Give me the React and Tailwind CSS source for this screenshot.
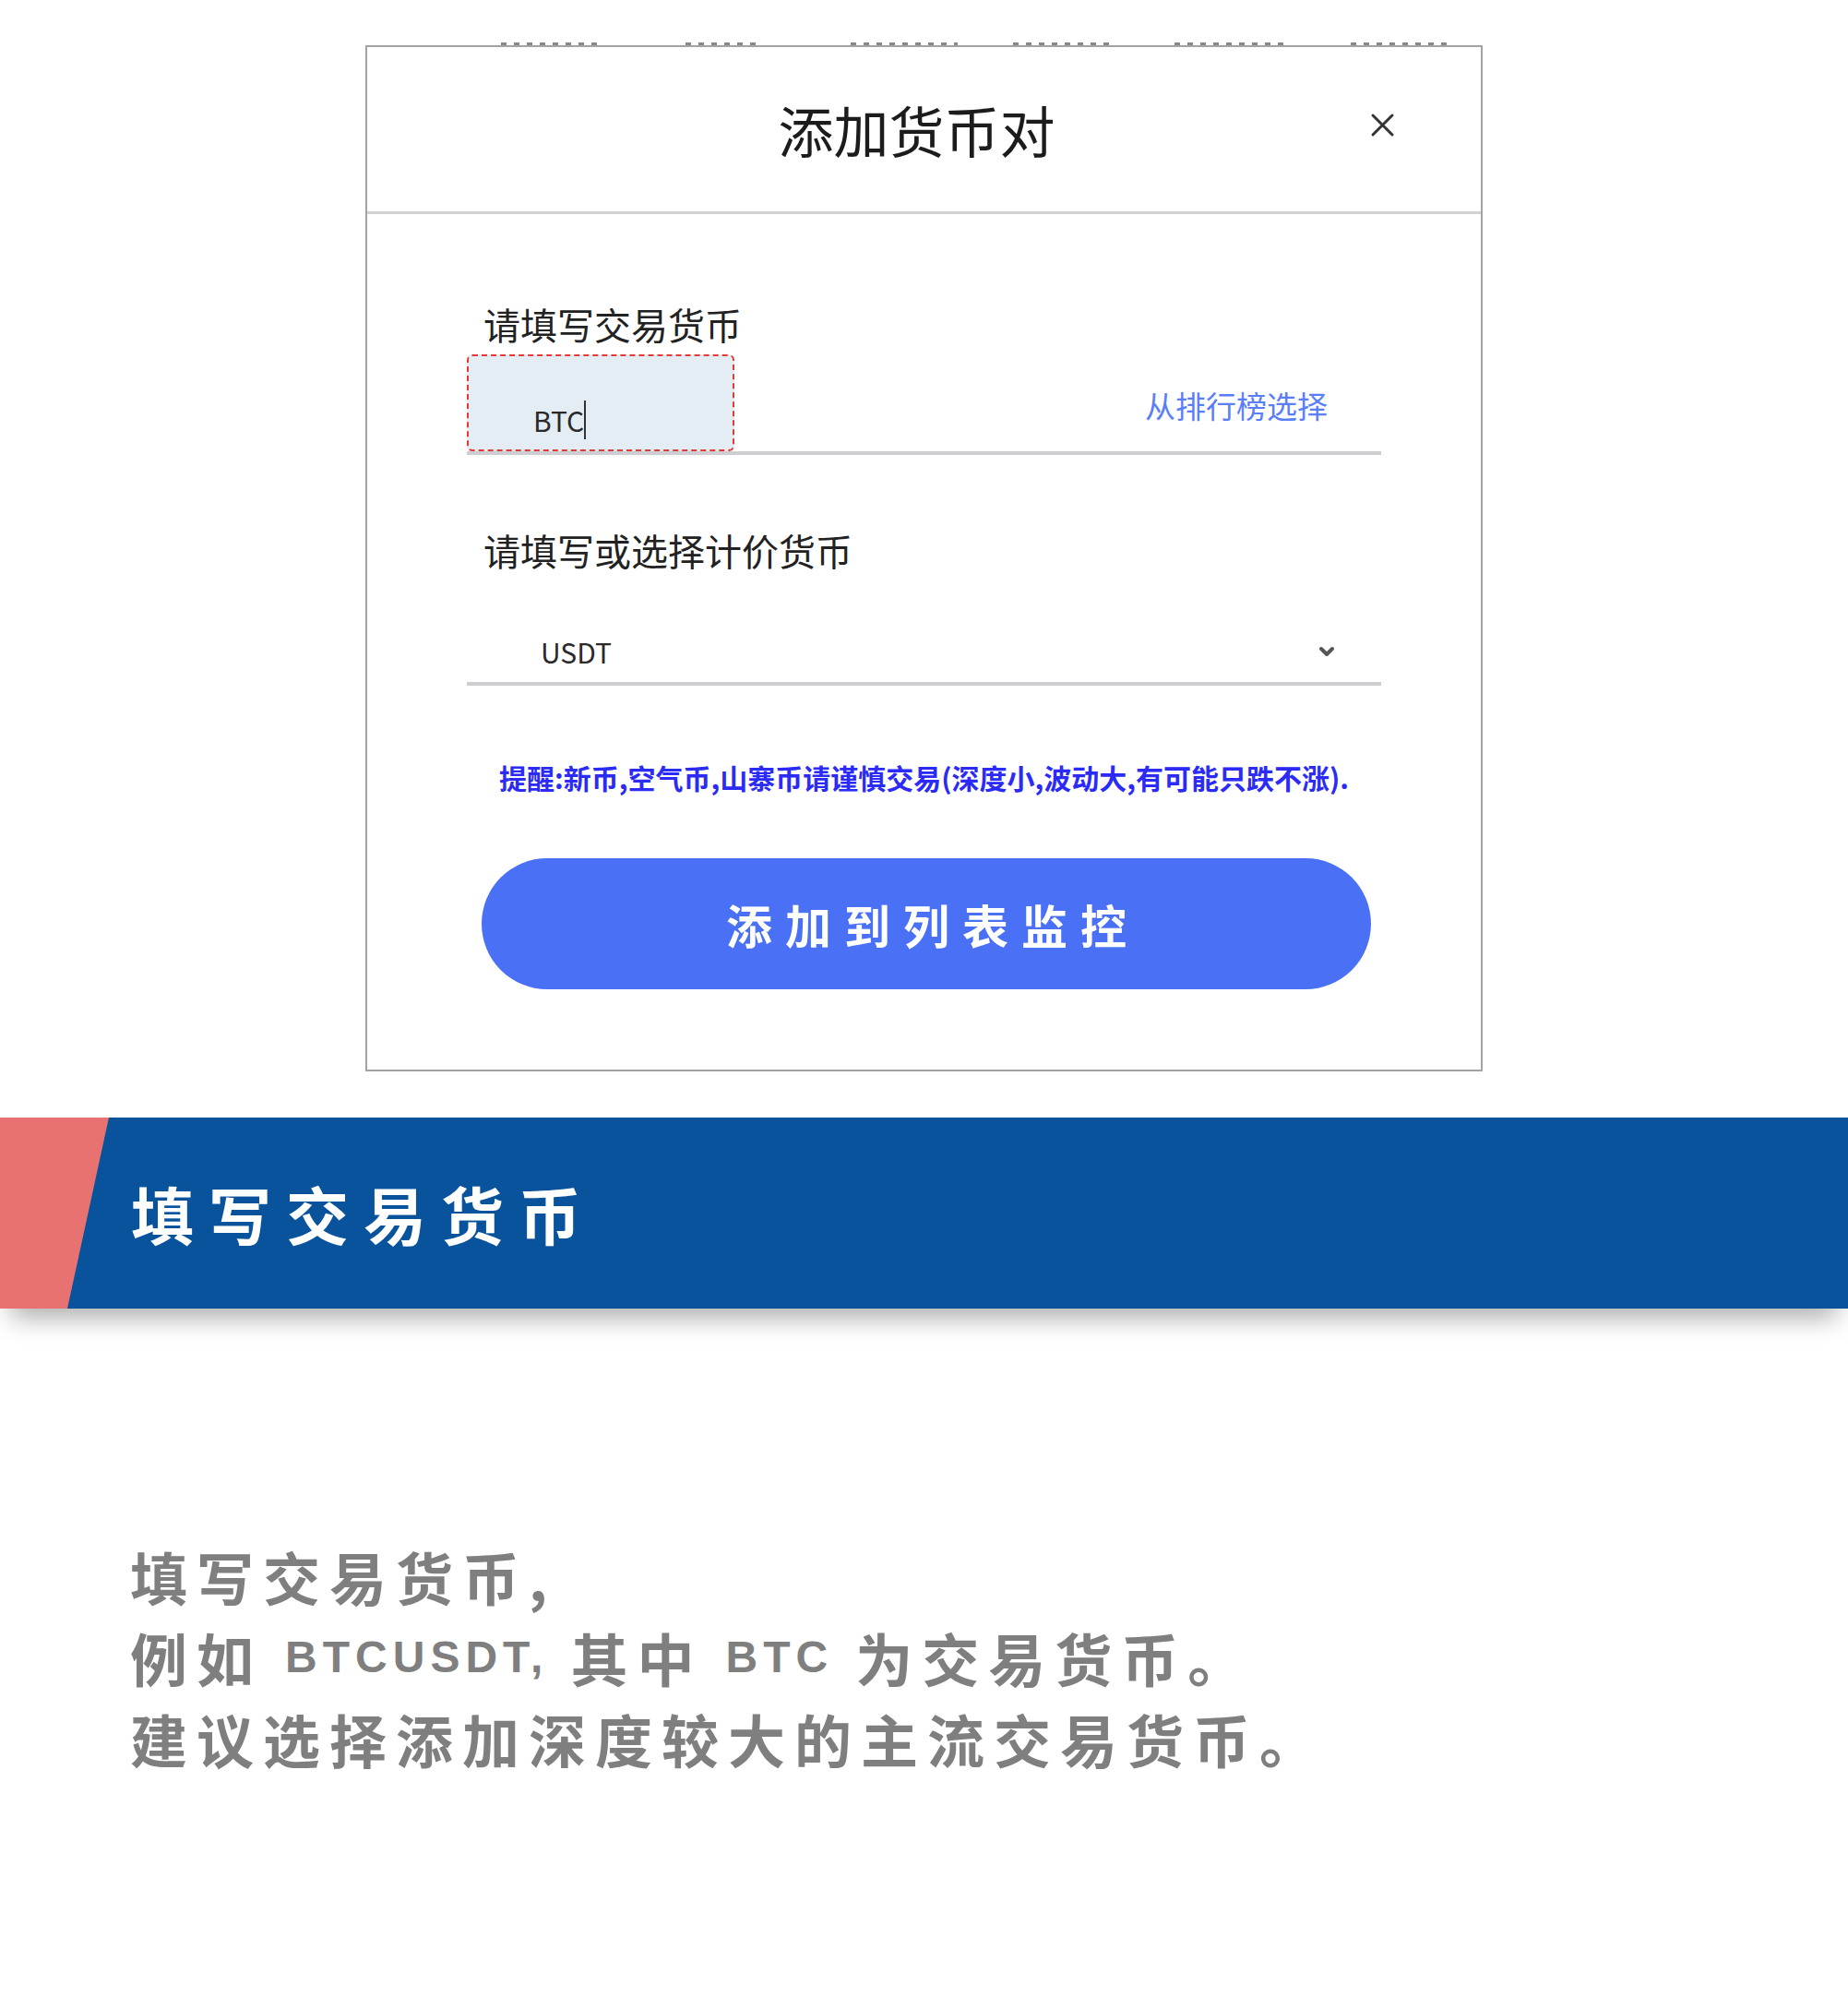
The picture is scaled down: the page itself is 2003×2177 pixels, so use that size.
import React from 'react';

const cjk = { fontFamily: '"Noto Sans CJK SC", "Noto Sans", sans-serif' };
const latin = { fontFamily: '"Liberation Sans", Arial, sans-serif' };

// bits of cut-off text peeking above the dialog frame
const crumbs = [
  [543, 112],
  [743, 84],
  [922, 116],
  [1098, 111],
  [1273, 120],
  [1464, 112],
];

const CloseIcon = () => (
  <svg width="27" height="27" viewBox="0 0 27 27">
    <path d="M3 3 L24 24 M24 3 L3 24" stroke="#333" strokeWidth="3" strokeLinecap="round" />
  </svg>
);

const Chevron = () => (
  <svg width="18" height="14" viewBox="0 0 18 14">
    <path d="M3 4 L9 10 L15 4" fill="none" stroke="#555" strokeWidth="4" strokeLinecap="round" strokeLinejoin="round" />
  </svg>
);

const AddPairDialog = () => {
  return (
    <div className="ml-[396px] w-[1211px]">
      {/* cut-off text above frame */}
      <div className="relative h-[49px]">
        {crumbs.map(([x, w]) => (
          <span
            key={x}
            className="absolute bottom-0 h-[3px] bg-[repeating-linear-gradient(90deg,#555_0_6px,transparent_6px_14px)] opacity-70"
            style={{ left: x - 396, width: w }}
          />
        ))}
      </div>

      <div className="h-[1112px] border-2 border-[#a3a3a3] bg-white flex flex-col" style={cjk}>
        {/* Header */}
        <div className="relative h-[181px] border-b-[3px] border-[#d2d2d2] flex items-center justify-center pr-[16px]">
          <h2 className="text-[60px] leading-none font-normal text-[#1c1c1c]">添加货币对</h2>
          <button className="absolute right-[93px] top-[71px]">
            <CloseIcon />
          </button>
        </div>

        {/* Form */}
        <div className="px-[108px] flex flex-col">
          <label className="pt-[99px] pl-[18px] text-[40px] leading-[40px] text-[#222]">请填写交易货币</label>

          <div className="mt-[13px] flex justify-between items-start border-b-4 border-[#cdcdd2]">
            <div className="w-[290px] h-[105px] border-2 border-dashed border-[#e53935] rounded-[6px] bg-[#e4ecf4] pl-[70px] pt-[48px]">
              <span className="text-[30px] leading-[36px] text-[#2a2a2a] align-middle">BTC</span>
              <span className="inline-block w-[2px] h-[42px] bg-[#333] align-middle" />
            </div>
            <a className="mt-[35px] mr-[58px] text-[33px] leading-[40px] text-[#5a7ef7]">从排行榜选择</a>
          </div>

          <label className="mt-[83px] pl-[18px] text-[40px] leading-[40px] text-[#222]">请填写或选择计价货币</label>

          <div className="mt-[57px] h-[66px] flex items-center justify-between pl-[80px] pr-[50px] border-b-4 border-[#cdcdd2] box-content">
            <span className="text-[30px] leading-[36px] text-[#2a2a2a]">USDT</span>
            <Chevron />
          </div>

          <p className="mt-[81px] text-center text-[30px] leading-[36px] font-bold text-[#2b2bf5]">
            提醒:新币,空气币,山寨币请谨慎交易(深度小,波动大,有可能只跌不涨).
          </p>

          <button className="mt-[70px] ml-[16px] mr-[11px] h-[142px] rounded-full bg-[#4a70f5] flex items-center justify-center pl-[14px] text-white text-[50px] font-bold tracking-[14px]">
            添加到列表监控
          </button>
        </div>
      </div>
    </div>
  );
};

const SectionBanner = ({ title }) => (
  <div className="mt-[50px] h-[207px] bg-[#e87272] shadow-[0_22px_26px_-12px_rgba(0,0,0,0.32)]">
    <div className="h-full w-full bg-[#08539c] [clip-path:polygon(118px_0,100%_0,100%_100%,73px_100%)] flex items-center pl-[142px]">
      <h1 className="text-white text-[68px] font-bold tracking-[16px] leading-none" style={cjk}>
        {title}
      </h1>
    </div>
  </div>
);

const Description = () => (
  <div
    className="mt-[246px] pl-[141px] flex flex-col text-[62px] font-bold text-[#7f7f7f] tracking-[10px]"
    style={cjk}
  >
    <div className="h-[88px] flex items-center">填写交易货币,</div>
    <div className="h-[88px] flex items-center whitespace-pre">
      例如 <span className="text-[48px] tracking-[6px]" style={latin}>BTCUSDT,</span> 其中{' '}
      <span className="text-[48px] tracking-[6px]" style={latin}>BTC</span> 为交易货币。
    </div>
    <div className="h-[88px] flex items-center">建议选择添加深度较大的主流交易货币。</div>
  </div>
);

export default function App() {
  return (
    <div className="w-full min-h-[2177px] bg-white overflow-hidden">
      <AddPairDialog />
      <SectionBanner title="填写交易货币" />
      <Description />
    </div>
  );
}
